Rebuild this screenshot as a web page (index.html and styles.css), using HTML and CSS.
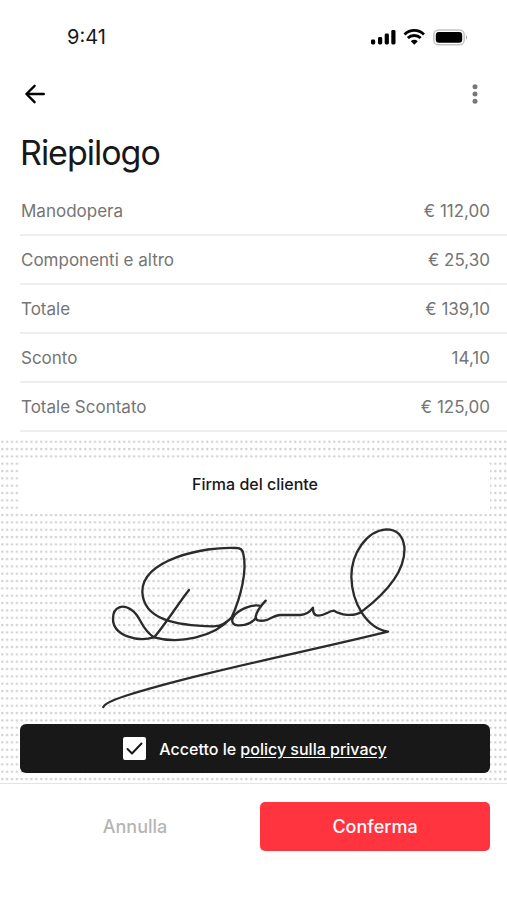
FILE: index.html
```html
<!DOCTYPE html>
<html lang="it">
<head>
<meta charset="utf-8">
<meta name="viewport" content="width=device-width, initial-scale=1">
<title>Riepilogo</title>
<link rel="stylesheet" href="styles.css">
</head>
<body>
<div class="status">
  <span class="time">9:41</span>
  <svg class="indicators" width="98" height="20" viewBox="0 1 98 20" aria-hidden="true">
    <rect x="1" y="13.500" width="4.200" height="5" rx="1.4"/>
    <rect x="8" y="11" width="4.200" height="7.500" rx="1.400"/>
    <rect x="14.700" y="7.500" width="4.200" height="11" rx="1.400"/>
    <rect x="21.300" y="4" width="4.200" height="14.500" rx="1.400"/>
    <g fill="none" stroke="#000" stroke-width="2.800">
      <path d="M34.500 8.400C40 3 48.400 3 54 8.400"/>
      <path d="M37.800 12.100C41.500 8.600 47 8.600 50.700 12.100"/>
    </g>
    <path d="M40.800 15.200C42.900 13.300 45.700 13.300 47.800 15.200L44.300 18.800Z"/>
    <rect x="63.800" y="4" width="30.400" height="14.800" rx="4.600" fill="none" stroke="#c4c4c4" stroke-width="1.500"/>
    <rect x="65.800" y="6" width="26.400" height="10.800" rx="3"/>
    <path d="M96 9.200C97.600 9.900 97.600 12.900 96 13.600Z" fill="#a8a8a8"/>
  </svg>
</div>
<header class="nav">
  <button class="icon-button" type="button" aria-label="Indietro">
    <svg width="30" height="30" viewBox="0 0 30 30" fill="none" stroke="#000" stroke-width="2.400" stroke-linecap="round" stroke-linejoin="round"><path d="M23.800 15H6.500M14.600 6.800L6.400 15L14.600 23.200"/></svg>
  </button>
  <button class="icon-button" type="button" aria-label="Altre opzioni">
    <svg width="30" height="30" viewBox="0 0 30 30" fill="#777"><circle cx="15" cy="7.700" r="2.500"/><circle cx="15" cy="15" r="2.500"/><circle cx="15" cy="22.300" r="2.500"/></svg>
  </button>
</header>
<main>
  <h1>Riepilogo</h1>
  <table class="summary">
    <tbody>
      <tr><th scope="row">Manodopera</th><td>€ 112,00</td></tr>
      <tr><th scope="row">Componenti e altro</th><td>€ 25,30</td></tr>
      <tr><th scope="row">Totale</th><td>€ 139,10</td></tr>
      <tr><th scope="row">Sconto</th><td>14,10</td></tr>
      <tr><th scope="row">Totale Scontato</th><td>€ 125,00</td></tr>
    </tbody>
  </table>
  <section class="pad">
    <svg class="dots" width="100%" height="100%" aria-hidden="true">
      <defs><pattern id="dot" width="4.883" height="7.333" patternUnits="userSpaceOnUse" y="6"><circle cx="2.200" cy="3.700" r="1.250" fill="#d0d0d0"/></pattern></defs>
      <rect y="6" width="100%" height="100%" fill="url(#dot)"/>
    </svg>
    <h2 class="pad-title">Firma del cliente</h2>
    <svg class="signature" viewBox="-270 -18 1521 630" role="img" aria-label="Firma">
      <g fill="none" stroke="#2b2b2b" stroke-width="7" stroke-linecap="round" stroke-linejoin="round">
        <path d="M297 210C265 250 220 322 192 352C145 366 68 350 69 295C70 258 100 252 125 270C155 290 150 325 192 352C265 372 370 355 425 292C453 230 472 150 460 102C458 88 450 84 440 84C340 78 157 120 157 215C160 300 260 317 370 319C400 318 412 303 432 288"/>
        <path d="M513 258C485 250 440 272 429 292C422 308 432 317 446 316C466 317 486 308 498 294"/>
        <path d="M527 242C512 258 500 274 497 290C495 303 510 303 522 302C540 300 552 285 570 285L630 285C650 284 660 276 669 263C668 278 672 286 684 287C705 287 715 273 732 272C750 284 790 292 815 275C900 210 948 145 943 80C938 45 918 28 889 28C830 32 784 100 784 170C786 250 830 325 894 335C650 395 320 460 105 528C75 538 45 549 40 561"/>
      </g>
    </svg>
    <div class="consent">
      <span class="check">
        <input type="checkbox" id="privacy" checked>
        <svg viewBox="0 0 23 23" fill="none" stroke="#181818" stroke-width="2" stroke-linecap="round" stroke-linejoin="round" aria-hidden="true"><path d="M4.500 12L9 16.500L18.500 6.500"/></svg>
      </span>
      <label for="privacy">Accetto le <a href="#privacy">policy sulla privacy</a></label>
    </div>
  </section>
</main>
<footer class="actions">
  <button class="button" type="button">Annulla</button>
  <button class="button primary" type="button">Conferma</button>
</footer>
</body>
</html>
```
FILE: styles.css
```css
* { box-sizing: border-box; }

body {
  margin: 0;
  background: #fff;
  color: #181818;
  font-family: Inter, "Liberation Sans", sans-serif;
}

button { font: inherit; border: 0; background: none; padding: 0; }

.status {
  display: flex;
  align-items: center;
  justify-content: space-between;
  height: 74px;
  padding: 0 39px 0 67px;
}

.time { font-size: 20px; line-height: 24px; }

.nav {
  display: flex;
  align-items: center;
  justify-content: space-between;
  height: 40px;
  padding: 0 17px 0 20px;
}

.icon-button { display: block; height: 30px; }
.icon-button svg { display: block; }

h1 {
  margin: 0;
  padding: 19px 20px 14px;
  font-size: 34px;
  line-height: 40px;
  font-weight: 400;
  letter-spacing: -1px;
}

.summary {
  width: calc(100% - 20px);
  margin-left: 20px;
  border-spacing: 0;
  color: #757575;
  font-size: 17px;
  line-height: 24px;
}

.summary th,
.summary td {
  height: 49px;
  padding: 0;
  border-bottom: 2px solid #eee;
  font-weight: 400;
  text-align: left;
}

.summary th { padding-left: 1px; }
.summary td { padding-right: 17px; text-align: right; }

.pad {
  position: relative;
  padding: 28px 17px 10px 20px;
  border-bottom: 1px solid #e4e4e4;
}

.dots { position: absolute; inset: 0; }

.pad-title {
  position: relative;
  margin: 0;
  padding: 12px;
  border-radius: 6px;
  background: #fff;
  font-size: 16px;
  line-height: 24px;
  padding-bottom: 18px;
  font-weight: 500;
  text-align: center;
}

.signature {
  position: relative;
  display: block;
  width: calc(100% + 37px);
  margin: 0 -17px 0 -20px;
}

.consent {
  position: relative;
  display: flex;
  align-items: center;
  justify-content: center;
  gap: 13px;
  height: 49px;
  border-radius: 6px;
  background: #181818;
  color: #fff;
  font-size: 16px;
  line-height: 24px;
  font-weight: 500;
}

.consent a { color: inherit; text-underline-offset: 2px; }

.check { display: grid; }
.check > * { grid-area: 1 / 1; width: 23px; height: 23px; }
.check input { appearance: none; margin: 0; border-radius: 2px; background: #fff; }
.check svg { pointer-events: none; }
.check input:not(:checked) + svg { visibility: hidden; }

.actions {
  display: grid;
  grid-template-columns: 1fr 1fr;
  gap: 10px;
  padding: 18px 17px 18px 20px;
}

.button {
  height: 49px;
  border-radius: 5px;
  color: #b5b5b5;
  font-size: 18px;
  font-weight: 500;
}

.primary { background: #ff343e; color: #fff; }
```
